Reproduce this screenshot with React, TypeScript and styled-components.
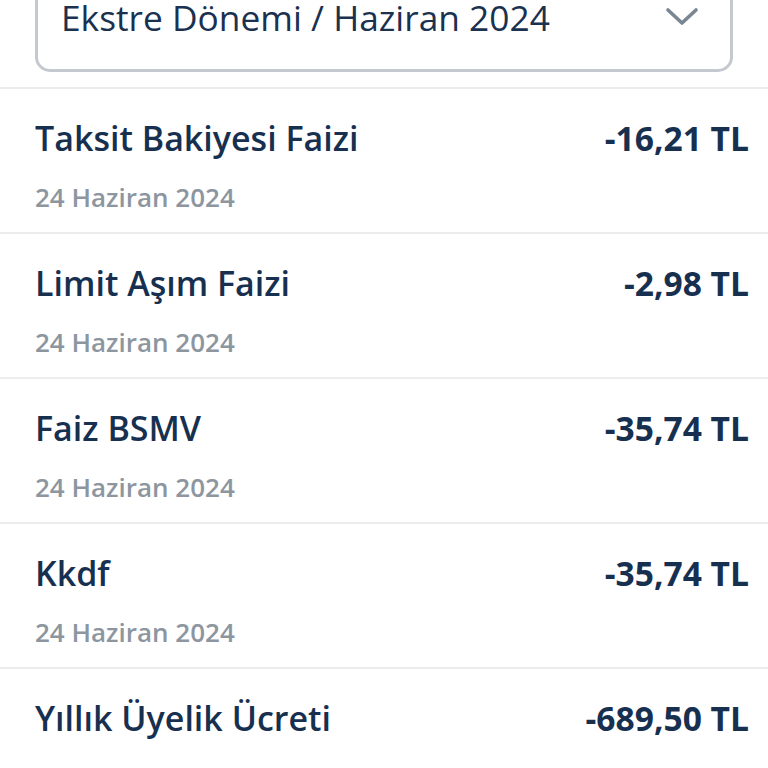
import styled, { createGlobalStyle } from "styled-components";

const GlobalStyle = createGlobalStyle`
  html, body {
    margin: 0;
    padding: 0;
    background: #ffffff;
    overflow: hidden;
  }
  body {
    font-family: "Open Sans", "Noto Sans", sans-serif;
    -webkit-font-smoothing: antialiased;
  }
`;

type Item = { title: string; date: string; amount: string };

const items: Item[] = [
  { title: "Taksit Bakiyesi Faizi", date: "24 Haziran 2024", amount: "-16,21 TL" },
  { title: "Limit Aşım Faizi", date: "24 Haziran 2024", amount: "-2,98 TL" },
  { title: "Faiz BSMV", date: "24 Haziran 2024", amount: "-35,74 TL" },
  { title: "Kkdf", date: "24 Haziran 2024", amount: "-35,74 TL" },
  { title: "Yıllık Üyelik Ücreti", date: "24 Haziran 2024", amount: "-689,50 TL" },
];

const ChevronDown = () => (
  <svg width="34" height="20" viewBox="0 0 34 20" fill="none">
    <polyline
      points="3,3 17,16 31,3"
      stroke="#7a8692"
      strokeWidth="3.6"
      strokeLinecap="round"
      strokeLinejoin="round"
    />
  </svg>
);

const App = () => {
  return (
    <Page>
      <GlobalStyle />
      <Header>
        <PeriodSelect>
          <PeriodText>Ekstre Dönemi / Haziran 2024</PeriodText>
          <ChevronDown />
        </PeriodSelect>
      </Header>
      <List>
        {items.map((item, i) => (
          <Row key={i}>
            <TopLine>
              <Title>{item.title}</Title>
              <Amount>{item.amount}</Amount>
            </TopLine>
            <DateText>{item.date}</DateText>
          </Row>
        ))}
      </List>
    </Page>
  );
};

const Page = styled.div`
  width: 768px;
  height: 768px;
  overflow: hidden;
  background: #ffffff;
`;

const Header = styled.div`
  display: flex;
  flex-direction: column;
  height: 89px;
  padding: 0 35px;
  box-sizing: border-box;
  border-bottom: 2px solid #ececec;
`;

const PeriodSelect = styled.div`
  margin-top: -40px;
  width: 698px;
  box-sizing: border-box;
  border: 3px solid #c4c8cf;
  border-radius: 15px;
  padding: 30px 31px 28px 23px;
  display: flex;
  align-items: center;
  justify-content: space-between;
  background: #ffffff;
`;

const PeriodText = styled.span`
  font-size: 35.3px;
  line-height: 48px;
  font-weight: 400;
  color: #1a3150;
`;

const List = styled.div`
  display: flex;
  flex-direction: column;
`;

const Row = styled.div`
  height: 145px;
  box-sizing: border-box;
  padding: 25px 19px 0 35px;
  border-bottom: 2px solid #ececec;
  display: flex;
  flex-direction: column;
  gap: 17px;
`;

const TopLine = styled.div`
  display: flex;
  align-items: baseline;
  justify-content: space-between;
`;

const Title = styled.span`
  font-size: 34px;
  line-height: 48px;
  font-weight: 600;
  color: #183050;
`;

const Amount = styled.span`
  font-size: 33.6px;
  line-height: 48px;
  font-weight: 700;
  color: #183050;
`;

const DateText = styled.span`
  font-size: 26px;
  line-height: 36px;
  font-weight: 600;
  color: #8d969f;
`;

export default App;
